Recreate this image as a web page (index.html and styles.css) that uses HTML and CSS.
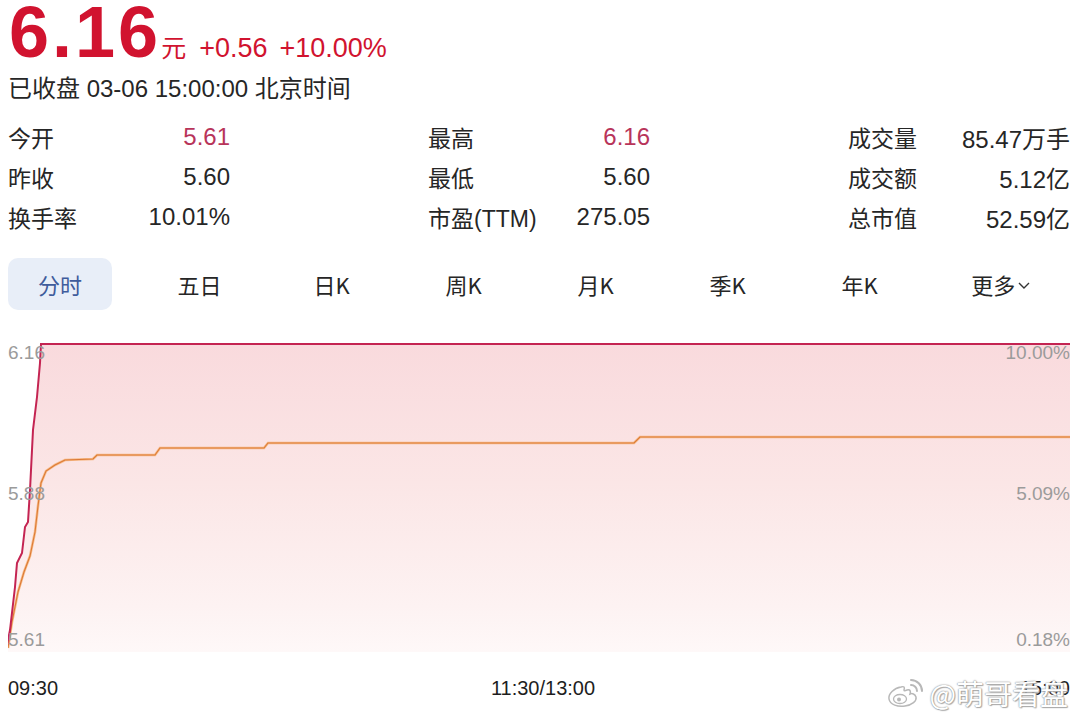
FILE: index.html
```html
<!DOCTYPE html>
<html lang="zh-CN">
<head>
<meta charset="utf-8">
<title>6.16 行情</title>
<link rel="stylesheet" href="styles.css">
</head>
<body>
<div class="page">
  <div class="price-row">
    <span class="price">6.16</span>
    <span class="unit">元</span>
    <span class="chg">+0.56</span>
    <span class="chg">+10.00%</span>
  </div>
  <div class="status">已收盘 03-06 15:00:00 北京时间</div>

  <div class="stats">
    <div class="col">
      <div class="item"><span class="lbl">今开</span><span class="val up">5.61</span></div>
      <div class="item"><span class="lbl">昨收</span><span class="val">5.60</span></div>
      <div class="item"><span class="lbl">换手率</span><span class="val">10.01%</span></div>
    </div>
    <div class="col">
      <div class="item"><span class="lbl">最高</span><span class="val up">6.16</span></div>
      <div class="item"><span class="lbl">最低</span><span class="val">5.60</span></div>
      <div class="item"><span class="lbl">市盈(TTM)</span><span class="val">275.05</span></div>
    </div>
    <div class="col">
      <div class="item"><span class="lbl">成交量</span><span class="val">85.47万手</span></div>
      <div class="item"><span class="lbl">成交额</span><span class="val">5.12亿</span></div>
      <div class="item"><span class="lbl">总市值</span><span class="val">52.59亿</span></div>
    </div>
  </div>

  <div class="tabs">
    <div class="tab active">分时</div>
    <div class="tab">五日</div>
    <div class="tab">日K</div>
    <div class="tab">周K</div>
    <div class="tab">月K</div>
    <div class="tab">季K</div>
    <div class="tab">年K</div>
    <div class="tab">更多<svg class="caret" width="16" height="10" viewBox="0 0 16 10"><path d="M3 3 L8 8 L13 3" fill="none" stroke="#333" stroke-width="1.4"/></svg></div>
  </div>

  <div class="chart">
    <svg class="plot" width="1062" height="330" viewBox="8 330 1062 330">
      <defs>
        <linearGradient id="fill" x1="0" y1="0" x2="0" y2="1">
          <stop offset="0" stop-color="#f9dadd"/>
          <stop offset="0.45" stop-color="#fbe6e6"/>
          <stop offset="0.85" stop-color="#fdf2f2"/>
          <stop offset="1" stop-color="#fef8f8"/>
        </linearGradient>
      </defs>
      <path d="M7 645 L10 630 L15 587 L17 563 L22 553 L25 527 L28 522 L30 490 L33 430 L37 397 L40 363 L41 344 L1070 344 L1070 652 L7 652 Z" fill="url(#fill)"/>
      <polyline points="8,648 12,622 18,592 24,572 30,556 35,532 38,506 41,483 46,471 55,465 65,460 93,459 97,455 155,455 160,448 264,448 268,443 634,443 640,437 1070,437" fill="none" stroke="#f6b070" stroke-width="2.6" opacity="0.8"/>
      <polyline points="8,648 12,622 18,592 24,572 30,556 35,532 38,506 41,483 46,471 55,465 65,460 93,459 97,455 155,455 160,448 264,448 268,443 634,443 640,437 1070,437" fill="none" stroke="#dc7a36" stroke-width="1.1"/>
      <polyline points="7,645 10,630 15,587 17,563 22,553 25,527 28,522 30,490 33,430 37,397 40,363 41,344 1070,344" fill="none" stroke="#c42452" stroke-width="2"/>
    </svg>
    <span class="ax l t">6.16</span>
    <span class="ax l m">5.88</span>
    <span class="ax l b">5.61</span>
    <span class="ax r t">10.00%</span>
    <span class="ax r m">5.09%</span>
    <span class="ax r b">0.18%</span>
  </div>

  <div class="times">
    <span>09:30</span>
    <span>11:30/13:00</span>
    <span>15:00</span>
  </div>

  <div class="watermark">
    <svg width="40" height="30" viewBox="0 0 40 30">
      <path d="M15 9 C8 10 2 16 3 21 C4 27 12 29 19 28 C26 27 31 23 30 19 C29 16 26 15 24 16 C25 13 24 11 21 12 C19 13 18 13 18 12 C19 9 18 8 15 9 Z" fill="#fff" stroke="#b8b8b8" stroke-width="1.5"/>
      <ellipse cx="14" cy="21" rx="6.5" ry="4.5" fill="#fff" stroke="#b8b8b8" stroke-width="1.3"/>
      <circle cx="13" cy="21.5" r="2" fill="#b8b8b8"/>
      <path d="M25 7 A6 6 0 0 1 31 13" stroke="#b8b8b8" stroke-width="2" fill="none" stroke-linecap="round"/>
      <path d="M25 2 A11 11 0 0 1 36 13" stroke="#b8b8b8" stroke-width="2" fill="none" stroke-linecap="round"/>
    </svg>
    <span class="wm-text">@萌哥看盘</span>
  </div>
</div>
</body>
</html>
```

FILE: styles.css
```css
html, body {
  margin: 0;
  padding: 0;
  background: #ffffff;
}

body {
  font-family: "Liberation Sans", "Noto Sans CJK SC", sans-serif;
  color: #222222;
}

.page {
  position: relative;
  width: 1080px;
  height: 722px;
  box-sizing: border-box;
  padding: 2px 10px 0 8px;
  overflow: hidden;
}

.price-row {
  display: flex;
  align-items: baseline;
  height: 60px;
  line-height: 60px;
  color: #d1132f;
}

.price {
  font-size: 72px;
  font-weight: bold;
  letter-spacing: 3px;
  margin-left: 1px;
}

.unit {
  font-family: "Noto Sans CJK SC", sans-serif;
  font-size: 25px;
  margin-left: 0;
}

.chg {
  font-size: 27px;
  margin-left: 12px;
}

.unit + .chg {
  margin-left: 13px;
}

.status {
  margin-top: 10px;
  font-size: 24px;
  line-height: 34px;
  color: #262626;
}

.stats {
  margin-top: 11px;
  display: grid;
  grid-template-columns: 222px 222px 222px;
  justify-content: space-between;
}

.col {
  display: flex;
  flex-direction: column;
}

.item {
  display: flex;
  justify-content: space-between;
  align-items: center;
  height: 40px;
  font-size: 23px;
  color: #262626;
}

.val {
  font-size: 24px;
}

.val.up {
  color: #b8345a;
}

.tabs {
  margin-top: 21px;
  display: grid;
  grid-template-columns: 125.5px repeat(6, 132px) 1fr;
}

.tabs .tab {
  height: 52px;
  display: flex;
  align-items: center;
  justify-content: center;
  font-family: "Noto Sans CJK SC", "Liberation Sans", sans-serif;
  font-size: 22px;
  color: #262626;
}

.tabs .tab.active {
  width: 104px;
  background: #e8eef8;
  border-radius: 10px;
  color: #3f5c9c;
}

.tabs .tab:last-child {
  padding-left: 8px;
}

.caret {
  margin-left: 1px;
  margin-top: 2px;
}

.chart {
  position: relative;
  margin-top: 20px;
  height: 330px;
}

.plot {
  display: block;
}

.ax {
  position: absolute;
  font-size: 19px;
  line-height: 20px;
  color: #9b9b9b;
}

.ax.l { left: 0; }
.ax.r { right: 0; }
.ax.t { top: 13px; }
.ax.m { top: 154px; }
.ax.b { top: 300px; }

.times {
  margin-top: 14px;
  display: flex;
  justify-content: space-between;
  font-size: 20px;
  line-height: 28px;
  color: #1e1e1e;
}

.times span:nth-child(2) {
  margin-left: 8px;
}

.watermark {
  position: absolute;
  right: 12px;
  top: 676px;
  display: flex;
  align-items: center;
  gap: 4px;
}

.wm-text {
  font-family: "Noto Sans CJK SC", sans-serif;
  font-size: 28px;
  line-height: 34px;
  color: #ffffff;
  text-shadow: 0 0 1px #8d8d8d, 0 0 2px #a0a0a0, 1px 1px 1px #b0b0b0;
}
```
